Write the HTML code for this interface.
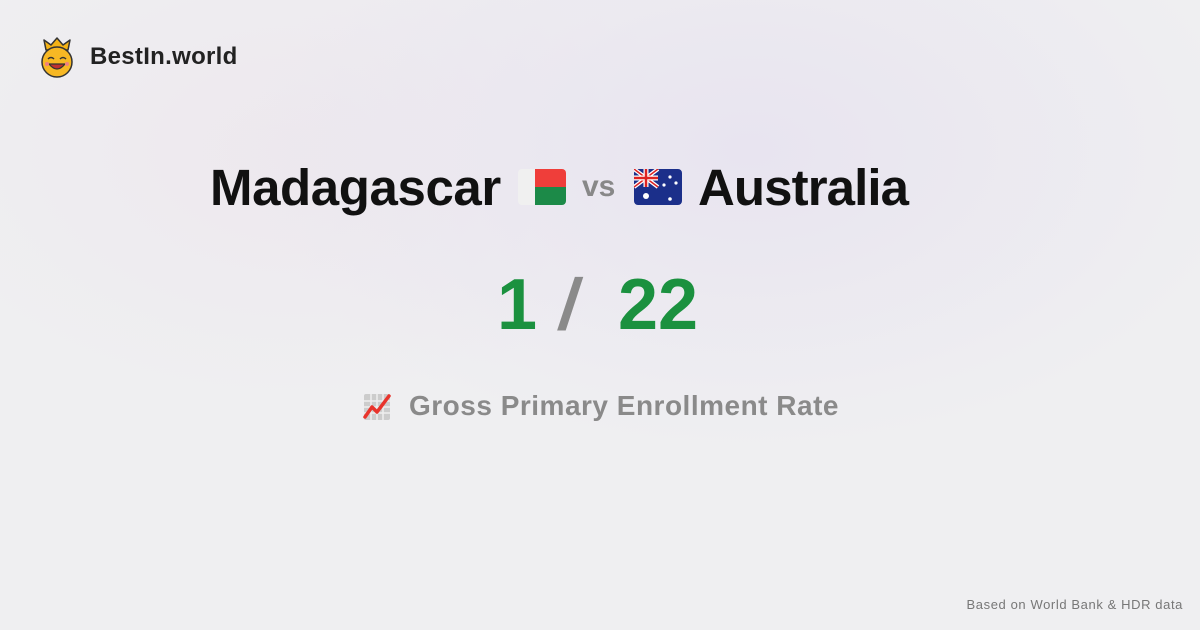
<!DOCTYPE html>
<html><head><meta charset="utf-8"><style>
html,body{margin:0;padding:0}
body{width:1200px;height:630px;overflow:hidden;position:relative;font-family:"Liberation Sans",sans-serif;
background:radial-gradient(ellipse 500px 300px at 750px 150px,#e8e4f0 0%,rgba(236,234,242,0) 100%),radial-gradient(ellipse 400px 250px at 300px 150px,#ede8ee 0%,rgba(238,236,240,0) 100%),#efeff1;}
.a{position:absolute;white-space:nowrap}
</style></head><body>
<svg class="a" style="left:38px;top:36px" width="38" height="42" viewBox="0 0 38 42">
<path d="M8 14 L6 4 L13 9 L19 2 L25 9 L32 4 L30 14 Z" fill="#f5b315" stroke="#333" stroke-width="1.5" stroke-linejoin="round"/>
<circle cx="19" cy="26" r="15" fill="#f7b824" stroke="#333" stroke-width="1.5"/>
<path d="M10 23 q3 -3 6 0 M22 23 q3 -3 6 0" stroke="#333" stroke-width="1.5" fill="none"/>
<path d="M11 28 q8 10 16 0 Z" fill="#c03030" stroke="#333" stroke-width="1.2"/>
<circle cx="9" cy="28" r="2" fill="#f08080"/><circle cx="29" cy="28" r="2" fill="#f08080"/>
</svg>
<div class="a" style="left:90px;top:43px;font-size:24px;font-weight:bold;color:#222;letter-spacing:0.3px">BestIn.world</div>
<div class="a" style="left:210px;top:158px;font-size:51px;font-weight:bold;color:#111;letter-spacing:-0.4px">Madagascar</div>
<svg class="a" style="left:518px;top:169px" width="48" height="36"><rect width="48" height="36" rx="4" fill="#f0f0f0"/><path d="M17 0 H44 a4 4 0 0 1 4 4 V18 H17Z" fill="#ef3e3a"/><path d="M17 18 H48 V32 a4 4 0 0 1 -4 4 H17Z" fill="#1c8a48"/></svg>
<div class="a" style="left:582px;top:170px;font-size:30px;font-weight:bold;color:#888">vs</div>
<svg class="a" style="left:634px;top:169px" width="48" height="36"><rect width="48" height="36" rx="4" fill="#1b2f8a"/><path d="M0 0 L24 18 M24 0 L0 18" stroke="#fff" stroke-width="4"/><path d="M0 0 L24 18 M24 0 L0 18" stroke="#d22" stroke-width="1.5"/><path d="M12 0 V18 M0 9 H24" stroke="#fff" stroke-width="5"/><path d="M12 0 V18 M0 9 H24" stroke="#d22" stroke-width="2.5"/><circle cx="12" cy="27" r="3" fill="#fff"/><circle cx="36" cy="8" r="1.6" fill="#fff"/><circle cx="30" cy="16" r="1.6" fill="#fff"/><circle cx="42" cy="14" r="1.6" fill="#fff"/><circle cx="36" cy="30" r="1.8" fill="#fff"/></svg>
<div class="a" style="left:698px;top:158px;font-size:51px;font-weight:bold;color:#111;letter-spacing:-0.9px">Australia</div>
<div class="a" style="left:497px;top:264px;font-size:72px;font-weight:bold;color:#1b913f">1</div>
<div class="a" style="left:560px;top:264px;font-size:72px;font-weight:bold;color:#8a8a8a;transform:skewX(-8deg)">/</div>
<div class="a" style="left:618px;top:264px;font-size:72px;font-weight:bold;color:#1b913f">22</div>
<svg class="a" style="left:362px;top:392px" width="30" height="30" viewBox="0 0 30 30"><g fill="#ccc"><rect x="2" y="2" width="26" height="26" rx="2"/></g><path d="M2 9 H28 M2 15 H28 M2 21 H28 M9 2 V28 M15 2 V28 M21 2 V28" stroke="#eee" stroke-width="1.5"/><path d="M3 25 L10 15 L15 20 L27 4" stroke="#e8342c" stroke-width="3.5" fill="none" stroke-linejoin="round" stroke-linecap="round"/></svg>
<div class="a" style="left:409px;top:390px;font-size:28px;font-weight:bold;color:#8a8a8a;letter-spacing:0.5px">Gross Primary Enrollment Rate</div>
<div class="a" style="right:17px;top:597px;font-size:13px;color:#777;letter-spacing:0.6px">Based on World Bank &amp; HDR data</div>
</body></html>
